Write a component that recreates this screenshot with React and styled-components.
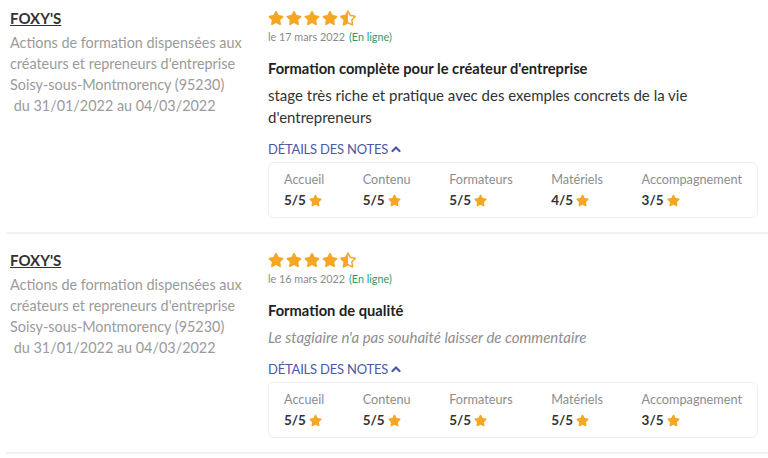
import React from "react";
import styled, { createGlobalStyle } from "styled-components";
import { FaStar, FaStarHalfAlt } from "react-icons/fa";

const GlobalStyle = createGlobalStyle`
  body {
    margin: 0;
    background: #ffffff;
    font-family: Lato, "Open Sans", sans-serif;
    color: #333;
  }
`;

const GOLD = "#f5a623";

const List = styled.div`
  padding-left: 6px;
  width: 762px;
`;

const Review = styled.div`
  display: flex;
  padding: ${(p) => (p.$first ? "9px" : "17px")} 0 14px 4px;
  border-bottom: 2px solid #f2f2f2;
`;

const Info = styled.div`
  width: 258px;
  flex-shrink: 0;
`;

const Org = styled.a`
  display: block;
  font-size: 15px;
  font-weight: 700;
  color: #333;
  text-decoration: underline;
  line-height: 20px;
  margin-top: -1px;
`;

const Desc = styled.div`
  margin-top: 4px;
  width: 240px;
  font-size: 14.4px;
  line-height: 21px;
  color: #9b9b9b;
  white-space: pre-wrap;
`;

const Main = styled.div`
  flex: 1;
  padding-right: 10px;
`;

const Stars = styled.div`
  display: flex;
  gap: 2px;
  height: 18px;
  align-items: center;
  color: ${GOLD};
  font-size: 16px;
`;

const Meta = styled.div`
  font-size: 10.8px;
  line-height: 14px;
  color: #8a8a8a;
  margin-top: 3px;
`;

const Mode = styled.span`
  color: #2f9a6c;
  margin-left: 4px;
`;

const Title = styled.div`
  font-size: 14.7px;
  font-weight: 700;
  color: #222;
  line-height: 22px;
  margin-top: 13px;
`;

const Comment = styled.div`
  font-size: 15px;
  line-height: 22px;
  color: ${(p) => (p.$empty ? "#8e8e8e" : "#333")};
  font-style: ${(p) => (p.$empty ? "italic" : "normal")};
  margin-top: 5px;
`;

const Toggle = styled.div`
  display: flex;
  align-items: center;
  gap: 3px;
  margin-top: 12px;
  font-size: 13px;
  line-height: 18px;
  color: #4d57a8;
  text-transform: uppercase;
  letter-spacing: -0.2px;
`;

const NotesBox = styled.div`
  display: flex;
  justify-content: space-between;
  margin-top: 4px;
  padding: 7px 15px 8px 15px;
  border: 1px solid #efefef;
  border-radius: 6px;
`;

const Note = styled.div`
  display: flex;
  flex-direction: column;
`;

const NoteLabel = styled.div`
  font-size: 12.7px;
  line-height: 18px;
  color: #8d8d8d;
`;

const NoteValue = styled.div`
  display: flex;
  align-items: center;
  gap: 3px;
  margin-top: 3px;
  font-size: 13.5px;
  font-weight: 700;
  line-height: 18px;
  color: #333;

  svg {
    color: ${GOLD};
    font-size: 13px;
  }
`;

const Chevron = () => (
  <svg width="10" height="10" viewBox="0 0 10 10">
    <path d="M1.5 7L5 3.5 8.5 7" fill="none" stroke="#4d57a8" strokeWidth="2.2" strokeLinecap="round" />
  </svg>
);

const reviews = [
  {
    date: "le 17 mars 2022",
    title: "Formation complète pour le créateur d'entreprise",
    comment: "stage très riche et pratique avec des exemples concrets de la vie d'entrepreneurs",
    notes: ["5/5", "5/5", "5/5", "4/5", "3/5"],
  },
  {
    date: "le 16 mars 2022",
    title: "Formation de qualité",
    comment: null,
    notes: ["5/5", "5/5", "5/5", "5/5", "3/5"],
  },
];

const labels = ["Accueil", "Contenu", "Formateurs", "Matériels", "Accompagnement"];

const App = () => (
  <>
    <GlobalStyle />
    <List>
      {reviews.map((r, i) => (
        <Review key={i} $first={i === 0}>
          <Info>
            <Org>FOXY'S</Org>
            <Desc>
              {"Actions de formation dispensées aux créateurs et repreneurs d'entreprise\nSoisy-sous-Montmorency (95230)\n du 31/01/2022 au 04/03/2022"}
            </Desc>
          </Info>
          <Main>
            <Stars>
              <FaStar />
              <FaStar />
              <FaStar />
              <FaStar />
              <FaStarHalfAlt />
            </Stars>
            <Meta>
              {r.date}
              <Mode>(En ligne)</Mode>
            </Meta>
            <Title>{r.title}</Title>
            <Comment $empty={!r.comment}>
              {r.comment || "Le stagiaire n'a pas souhaité laisser de commentaire"}
            </Comment>
            <Toggle>
              Détails des notes <Chevron />
            </Toggle>
            <NotesBox>
              {labels.map((l, k) => (
                <Note key={l}>
                  <NoteLabel>{l}</NoteLabel>
                  <NoteValue>
                    {r.notes[k]} <FaStar />
                  </NoteValue>
                </Note>
              ))}
            </NotesBox>
          </Main>
        </Review>
      ))}
    </List>
  </>
);

export default App;
